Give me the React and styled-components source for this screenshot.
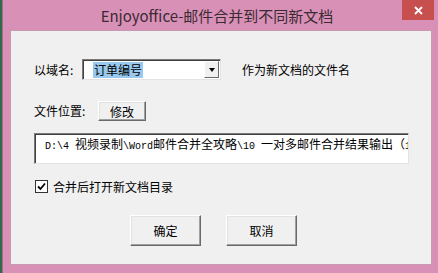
import React from "react";
import styled, { createGlobalStyle } from "styled-components";

const GlobalStyle = createGlobalStyle`
  html, body {
    margin: 0;
    padding: 0;
    background: #2f6b4a;
    overflow: hidden;
  }
`;

const cjk = `"Noto Sans CJK SC", "Noto Sans", sans-serif`;

const Window = styled.div`
  box-sizing: border-box;
  width: 436px;
  height: 273px;
  margin-left: 2px;
  background: #d990b7;
  border-left: 1px solid #a86a8a;
  padding: 0 6px 8px 7px;
  display: flex;
  flex-direction: column;
  font-family: ${cjk};
`;

const TitleBar = styled.div`
  position: relative;
  height: 30px;
  display: flex;
  align-items: center;
  justify-content: center;
  padding-right: 8px;
  font-size: 15px;
  color: #3a2a32;
`;

const CloseButton = styled.div`
  position: absolute;
  top: 0;
  right: -2px;
  width: 32px;
  height: 20px;
  background: #c7504f;
  color: #fff;
  display: flex;
  align-items: center;
  justify-content: center;
`;

const Client = styled.div`
  flex: 1;
  box-sizing: border-box;
  background: #f0f0f0;
  border: 1px solid #c89ab2;
  padding: 28px 0 0 23px;
  font-size: 12px;
  color: #000;
`;

const Row = styled.div`
  display: flex;
  align-items: center;
  height: ${(p) => p.h || 21}px;
  margin-top: ${(p) => p.mt || 0}px;
`;

const Label = styled.span`
  width: ${(p) => p.w}px;
  flex: none;
  line-height: 1;
`;

const Combo = styled.div`
  box-sizing: border-box;
  width: 139px;
  height: 21px;
  display: flex;
  align-items: center;
  background: #fff;
  border-top: 1px solid #7a7a7a;
  border-left: 1px solid #7a7a7a;
  border-right: 1px solid #e3e3e3;
  border-bottom: 1px solid #e3e3e3;
  box-shadow: inset 1px 1px 0 #404040;
  padding: 1px 1px 1px 10px;
`;

const Selected = styled.span`
  background: #99c9ef;
  padding: 1px 1px;
  line-height: 14px;
`;

const DropButton = styled.div`
  margin-left: auto;
  width: 15px;
  height: 17px;
  box-sizing: border-box;
  background: #f0f0f0;
  border-top: 1px solid #fff;
  border-left: 1px solid #fff;
  border-right: 1px solid #696969;
  border-bottom: 1px solid #696969;
  display: flex;
  align-items: center;
  justify-content: center;
`;

const Arrow = styled.div`
  width: 0;
  height: 0;
  border-left: 3.5px solid transparent;
  border-right: 3.5px solid transparent;
  border-top: 4px solid #000;
`;

const Hint = styled.span`
  margin-left: 21px;
`;

const Button = styled.button`
  box-sizing: border-box;
  width: ${(p) => p.w}px;
  height: ${(p) => p.h}px;
  margin-left: ${(p) => p.ml || 0}px;
  background: #f0f0f0;
  border-top: 1px solid #fff;
  border-left: 1px solid #fff;
  border-right: 1px solid #696969;
  border-bottom: 1px solid #696969;
  box-shadow: inset -1px -1px 0 #a0a0a0, inset 1px 1px 0 #e3e3e3;
  font-family: ${cjk};
  font-size: 12px;
  color: #000;
  padding: 0;
  display: flex;
  align-items: center;
  justify-content: center;
`;

const PathBox = styled.div`
  box-sizing: border-box;
  width: 375px;
  height: 31px;
  margin-top: 12px;
  background: #fff;
  border-top: 1px solid #7a7a7a;
  border-left: 1px solid #7a7a7a;
  border-right: 1px solid #e3e3e3;
  border-bottom: 1px solid #e3e3e3;
  box-shadow: inset 1px 1px 0 #404040;
  padding: 2px 0 0 10px;
  font-size: 12px;
  line-height: 16px;
  white-space: nowrap;
  overflow: hidden;
`;

const Ascii = styled.span`
  font-family: "Liberation Mono", monospace;
  font-size: 10px;
`;

const Check = styled.div`
  box-sizing: border-box;
  width: 13px;
  height: 13px;
  margin-left: 1px;
  margin-right: 5px;
  background: #fff;
  border: 1px solid #333;
  display: flex;
  align-items: center;
  justify-content: center;
`;

const path = "D:\\4 视频录制\\Word邮件合并全攻略\\10 一对多邮件合并结果输出（1）";

// split the path into ascii / cjk runs so the ascii part can use the narrow mono face
function PathText({ text }) {
  const runs = text.match(/[\x00-\x7f]+|[^\x00-\x7f]+/g) || [];
  return runs.map((r, i) =>
    /^[\x00-\x7f]/.test(r) ? <Ascii key={i}>{r}</Ascii> : <span key={i}>{r}</span>
  );
}

export default function App() {
  return (
    <>
      <GlobalStyle />
      <Window>
        <TitleBar>
          Enjoyoffice-邮件合并到不同新文档
          <CloseButton>
            <svg width="9" height="9" viewBox="0 0 9 9">
              <path d="M1 1 L8 8 M8 1 L1 8" stroke="#fff" strokeWidth="1.8" />
            </svg>
          </CloseButton>
        </TitleBar>
        <Client>
          <Row>
            <Label w={48}>以域名:</Label>
            <Combo>
              <Selected>订单编号</Selected>
              <DropButton>
                <Arrow />
              </DropButton>
            </Combo>
            <Hint>作为新文档的文件名</Hint>
          </Row>
          <Row h={20} mt={21}>
            <Label w={64}>文件位置:</Label>
            <Button w={48} h={20}>修改</Button>
          </Row>
          <PathBox>
            <PathText text={path} />
          </PathBox>
          <Row h={13} mt={16}>
            <Check>
              <svg width="9" height="9" viewBox="0 0 9 9">
                <path d="M1 4.5 L3.5 7 L8 1.5" stroke="#000" strokeWidth="1.8" fill="none" />
              </svg>
            </Check>
            合并后打开新文档目录
          </Row>
          <Row h={31} mt={22}>
            <Button w={71} h={31} ml={96}>确定</Button>
            <Button w={71} h={31} ml={25}>取消</Button>
          </Row>
        </Client>
      </Window>
    </>
  );
}
